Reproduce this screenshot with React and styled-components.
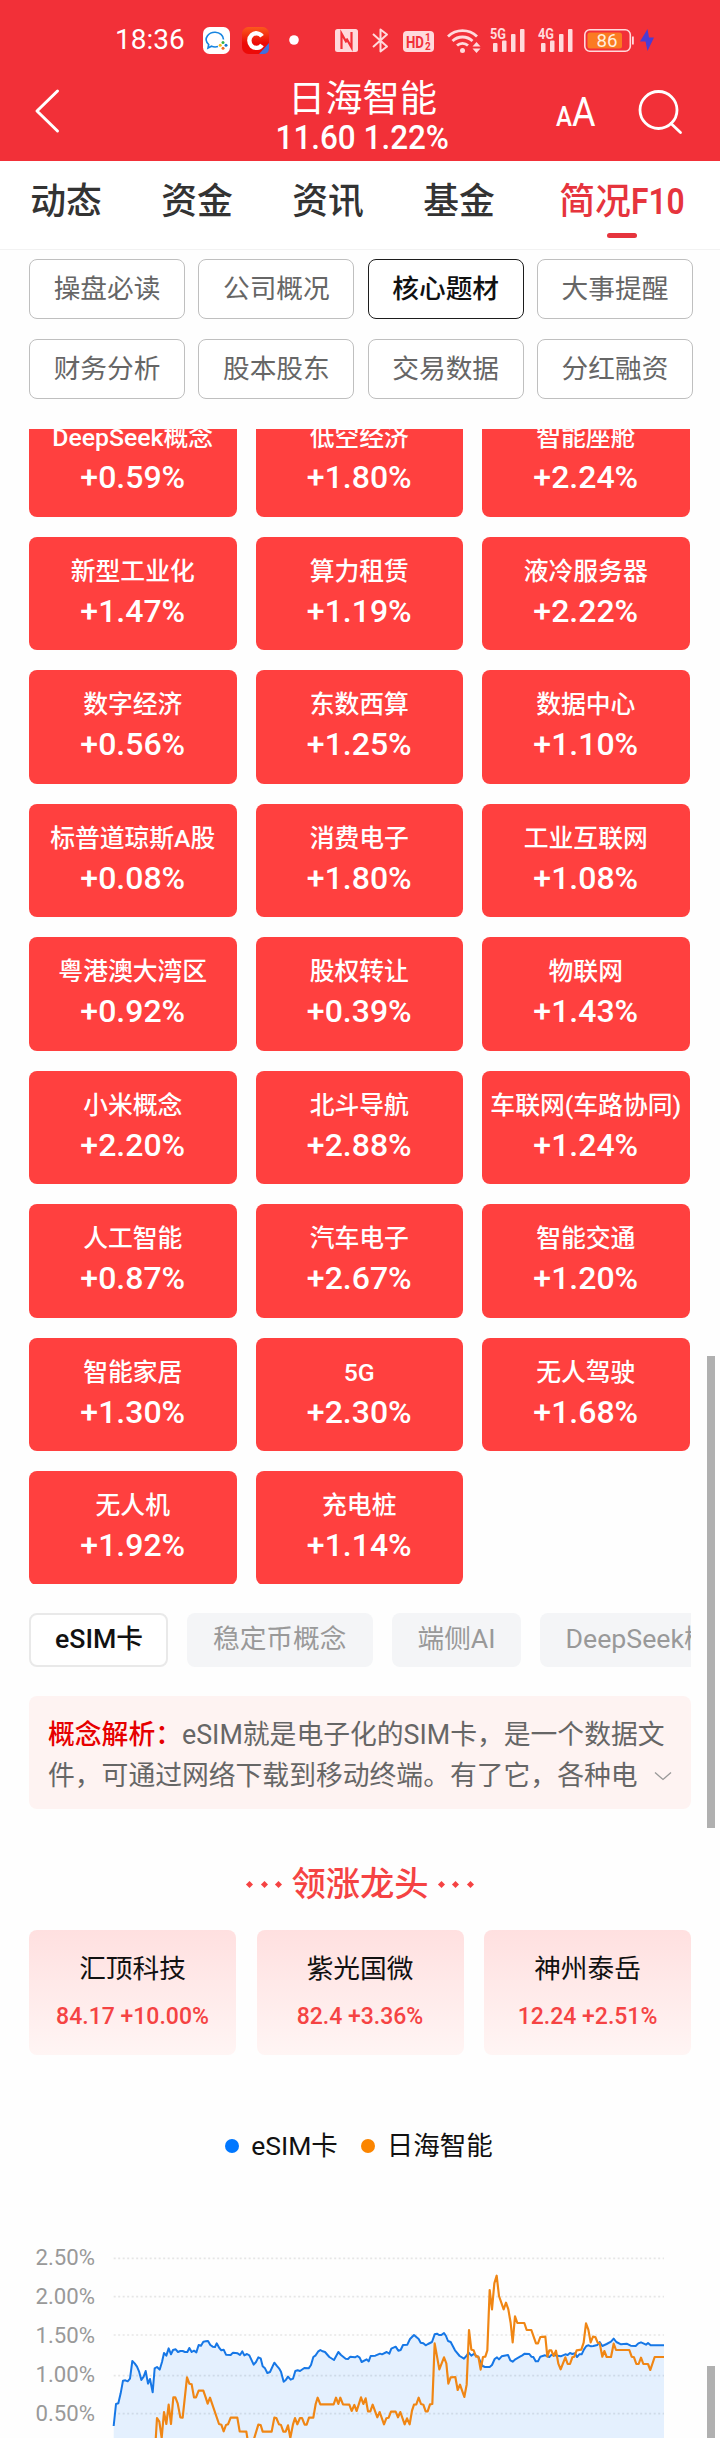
import React, { useState } from "react";
import styled, { createGlobalStyle } from "styled-components";

const GlobalStyle = createGlobalStyle`
  * {
    box-sizing: border-box;
  }
  body {
    margin: 0;
    background-color: #fefefe;
    font-family: Roboto, "Noto Sans CJK SC", sans-serif;
  }
`;

const Page = styled.div`
  position: relative;
  width: 720px;
  height: 2438px;
  overflow: hidden;
`;

const Header = styled.header`
  height: 161px;
  background-color: #f23038;
  color: #fff;
`;

const StatusBar = styled.div`
  display: flex;
  align-items: center;
  height: 72px;
  padding: 8px 0 0 115px;
`;

const Clock = styled.div`
  width: 70px;
  font-size: 28px;
  line-height: 32px;
  white-space: nowrap;
`;

const StatusIcon = styled.svg`
  display: block;
  flex: none;
  margin-left: ${(props) => props.$gap}px;
  margin-top: ${(props) => props.$drop || 0}px;
  overflow: visible;
`;

const TitleBar = styled.div`
  display: flex;
  align-items: center;
  justify-content: space-between;
  height: 78px;
  padding: 0 37px 0 35px;
`;

const TitleSide = styled.div`
  display: flex;
  align-items: center;
  justify-content: ${(props) => (props.$end ? "flex-end" : "flex-start")};
  gap: 43px;
  width: 150px;
`;

const TitleIcon = styled.svg`
  display: block;
  flex: none;
  overflow: visible;
`;

const StockTitle = styled.div`
  text-align: center;
  padding: 11px 0 0 7px;
`;

const StockName = styled.div`
  font-size: 37.3px;
  line-height: 42px;
`;

const StockPrice = styled.div`
  font-size: 33.8px;
  font-weight: 500;
  line-height: 34px;
  margin: 1px -6px 0;
  transform: scaleX(0.93);
  white-space: nowrap;
`;

const Tabs = styled.nav`
  display: flex;
  gap: 59px;
  height: 89px;
  padding: 19px 0 0 30px;
  border-bottom: 1px solid #f2f2f2;
  background-color: #fff;
`;

const Tab = styled.div`
  display: flex;
  flex-direction: column;
  align-items: center;
  font-size: 35.8px;
  font-weight: 500;
  line-height: 44px;
  white-space: nowrap;
  cursor: pointer;
  width: ${(props) => (props.$active ? "126px" : "72px")};
  margin-left: ${(props) => (props.$active ? "5px" : "0")};
  color: ${(props) => (props.$active ? "#e6343d" : "#333")};

  &::after {
    content: "";
    display: ${(props) => (props.$active ? "block" : "none")};
    width: 30px;
    height: 5px;
    margin-top: 9px;
    border-radius: 3px;
    background-color: #e6343d;
  }
`;

const TabLabel = styled.div`
  display: flex;
`;

const Narrow = styled.span`
  display: block;
  width: 54px;
  font-size: 36.5px;
  font-weight: 600;
  transform: scaleX(0.87);
  transform-origin: left center;
`;

const Filters = styled.div`
  display: grid;
  grid-template-columns: repeat(4, 156px);
  justify-content: space-between;
  row-gap: 20px;
  height: 179px;
  padding: 9px 27px 0 29px;
  align-content: start;
`;

const Filter = styled.button`
  height: 60px;
  padding: 0 0 1px;
  border: 1px solid ${(props) => (props.$active ? "#1c1c1c" : "#bfbfbf")};
  border-radius: 8px;
  background-color: #fff;
  color: ${(props) => (props.$active ? "#111" : "#666")};
  font-family: inherit;
  font-size: 26.7px;
  font-weight: ${(props) => (props.$active ? 500 : 400)};
  line-height: 40px;
`;

const TileArea = styled.div`
  height: 1155px;
  overflow: hidden;
`;

/* scrolled a little, so the first row is cut by the filters above */
const TileGrid = styled.div`
  display: grid;
  grid-template-columns: repeat(3, 207.5px);
  grid-auto-rows: 113.5px;
  gap: 20px 19px;
  margin-top: -26px;
  padding-left: 29px;
`;

const TileCard = styled.div`
  display: flex;
  flex-direction: column;
  align-items: center;
  padding-top: 17px;
  border-radius: 8px;
  background-color: #ff403f;
  color: #fff;
  white-space: nowrap;
`;

const TileName = styled.div`
  font-size: 24.8px;
  font-weight: 500;
  line-height: 36px;
`;

const TileChange = styled.div`
  font-size: 32px;
  font-weight: 500;
  line-height: 40px;
  margin-top: 1px;
`;

const Chips = styled.div`
  display: flex;
  gap: 19px;
  width: 662px;
  margin: 29px 0 0 29px;
  overflow: hidden;
`;

const Chip = styled.div`
  flex: none;
  width: ${(props) => props.$width}px;
  height: 54px;
  padding-left: ${(props) => (props.$active ? 24 : 26)}px;
  border: ${(props) => (props.$active ? "2px solid #e9e9e9" : "0")};
  border-radius: 8px;
  background-color: ${(props) => (props.$active ? "#fff" : "#f4f5f7")};
  color: ${(props) => (props.$active ? "#111" : "#999")};
  font-size: 26.7px;
  font-weight: ${(props) => (props.$active ? 500 : 400)};
  line-height: ${(props) => (props.$active ? 49 : 53)}px;
  white-space: nowrap;
`;

const Concept = styled.div`
  display: flex;
  align-items: flex-end;
  width: 662px;
  height: 113px;
  margin: 29px 0 0 29px;
  padding: 0 18px 13px 19px;
  border-radius: 8px;
  background-color: #fef3f2;
`;

const ConceptText = styled.div`
  flex: none;
  width: 606px;
  height: 81px;
  color: #666;
  font-size: 26.8px;
  line-height: 40.5px;
  white-space: nowrap;

  b {
    color: #e60000;
    font-weight: 500;
  }
`;

const ExpandIcon = styled.svg`
  display: block;
  flex: none;
  margin-bottom: 15px;
`;

const SectionTitle = styled.div`
  display: flex;
  align-items: center;
  justify-content: center;
  gap: 10px;
  height: 50px;
  margin-top: 50px;
  color: #f54343;
  font-size: 34.3px;
  font-weight: 500;
  line-height: 50px;
`;

const Dots = styled.div`
  display: flex;
  gap: 9.5px;

  i {
    width: 5px;
    height: 5px;
    background-color: #f54343;
    transform: rotate(45deg);
  }
`;

const Leaders = styled.div`
  display: flex;
  justify-content: space-between;
  width: 662px;
  margin: 21px 0 0 29px;
`;

const Leader = styled.div`
  width: 207px;
  height: 125px;
  padding-top: 19px;
  border-radius: 8px;
  background: linear-gradient(#ffe0e0, #fff5f4);
  text-align: center;
`;

const LeaderName = styled.div`
  color: #111;
  font-size: 26.7px;
  line-height: 40px;
`;

const LeaderPrice = styled.div`
  margin-top: 12px;
  color: #f54343;
  font-size: 23px;
  font-weight: 500;
  line-height: 32px;
`;

const Legend = styled.div`
  display: flex;
  justify-content: center;
  gap: 23px;
  height: 40px;
  margin: 71px 2px 0 0;
`;

const LegendItem = styled.div`
  display: flex;
  align-items: center;
  gap: 12px;
  color: #111;
  font-size: 26.5px;
  line-height: 40px;

  &::before {
    content: "";
    width: 14px;
    height: 14px;
    border-radius: 50%;
    background-color: ${(props) => props.$color};
  }
`;

const ChartArea = styled.div`
  display: flex;
  height: 208px;
  margin-top: 64px;
`;

const Axis = styled.div`
  width: 95px;
  height: 208px;
  padding-top: 7.5px;
  overflow: hidden;
  color: #999;
  font-size: 22.2px;
  line-height: 39px;
  text-align: right;
`;

const Plot = styled.svg`
  display: block;
  margin-left: 17px;
`;

const ScrollThumb = styled.div`
  position: absolute;
  top: ${(props) => props.$top}px;
  left: 707px;
  width: 8px;
  height: ${(props) => props.$height}px;
  background-color: #b0b0b0;
`;

const tabs = ["动态", "资金", "资讯", "基金"];

const filters = [
  "操盘必读", "公司概况", "核心题材", "大事提醒",
  "财务分析", "股本股东", "交易数据", "分红融资",
];

const concepts = [
  { name: "DeepSeek概念", change: "+0.59%" },
  { name: "低空经济", change: "+1.80%" },
  { name: "智能座舱", change: "+2.24%" },
  { name: "新型工业化", change: "+1.47%" },
  { name: "算力租赁", change: "+1.19%" },
  { name: "液冷服务器", change: "+2.22%" },
  { name: "数字经济", change: "+0.56%" },
  { name: "东数西算", change: "+1.25%" },
  { name: "数据中心", change: "+1.10%" },
  { name: "标普道琼斯A股", change: "+0.08%" },
  { name: "消费电子", change: "+1.80%" },
  { name: "工业互联网", change: "+1.08%" },
  { name: "粤港澳大湾区", change: "+0.92%" },
  { name: "股权转让", change: "+0.39%" },
  { name: "物联网", change: "+1.43%" },
  { name: "小米概念", change: "+2.20%" },
  { name: "北斗导航", change: "+2.88%" },
  { name: "车联网(车路协同)", change: "+1.24%" },
  { name: "人工智能", change: "+0.87%" },
  { name: "汽车电子", change: "+2.67%" },
  { name: "智能交通", change: "+1.20%" },
  { name: "智能家居", change: "+1.30%" },
  { name: "5G", change: "+2.30%" },
  { name: "无人驾驶", change: "+1.68%" },
  { name: "无人机", change: "+1.92%" },
  { name: "充电桩", change: "+1.14%" },
];

const chips = [
  { name: "eSIM卡", width: 139 },
  { name: "稳定币概念", width: 185.5 },
  { name: "端侧AI", width: 129 },
  { name: "DeepSeek概念", width: 212 },
];

const leaders = [
  { name: "汇顶科技", price: "84.17 +10.00%" },
  { name: "紫光国微", price: "82.4 +3.36%" },
  { name: "神州泰岳", price: "12.24 +2.51%" },
];

const axisLabels = ["2.50%", "2.00%", "1.50%", "1.00%", "0.50%"];
const gridLines = [85, 200, 315, 437, 551];

// series points, in thirds of a pixel
const esimLine =
  "341,588 348,522 355,520 362,490 369,452 376,451 383,454 390,446 397,393 404,400 411,410 417,424 424,450 431,440 437,423 444,461 450,447 458,487 464,415 471,411 479,419 486,396 492,369 499,377 506,355 513,373 519,360 527,358 534,366 541,363 548,363 555,366 562,366 568,354 575,366 582,362 589,367 596,345 603,347 610,335 617,334 624,333 631,345 638,350 645,351 650,340 658,354 664,361 671,359 678,374 692,375 699,368 713,370 720,375 727,364 733,376 741,372 748,376 761,404 768,396 775,382 782,385 788,409 795,415 802,429 810,426 823,398 830,407 837,415 843,425 851,455 858,449 864,440 872,449 879,446 886,423 893,421 900,423 913,414 926,415 933,405 940,381 947,376 954,365 961,360 968,364 975,366 988,381 1002,390 1015,366 1023,375 1037,386 1044,387 1051,380 1065,382 1072,378 1079,383 1085,396 " +
  "1100,388 1106,394 1112,378 1126,377 1140,371 1146,373 1160,366 1168,371 1174,356 1187,350 1195,362 1202,360 1209,345 1222,344 1230,327 1242,315 1256,327 1262,338 1270,340 1277,346 1284,342 1296,336 1304,313 1311,311 1317,315 1324,315 1332,309 1338,318 1344,333 1352,336 1365,361 1379,378 1392,386 1399,378 1406,368 1414,377 1421,372 1435,381 1442,397 1448,408 1455,411 1469,411 1476,405 1484,387 1491,382 1497,388 1505,379 1524,375 1531,391 1538,395 1546,388 1560,380 1567,376 1574,371 1588,372 1594,380 1600,381 1607,394 1614,394 1621,380 1635,376 1641,378 1648,381 1655,374 1682,379 1696,373 1703,375 1710,369 1717,372 1725,370 1731,381 1738,373 1745,373 1752,358 1759,348 1766,346 1773,349 1780,348 1792,345 1799,336 1807,348 1820,342 1833,335 1841,326 1849,336 1863,343 1880,341 1892,347 1907,348 1915,340 1923,337 1930,340 1938,344 1944,339 1952,346 1992,346";

const stockLine =
  "467,630 471,564 478,575 485,624 492,546 499,582 506,524 513,582 520,502 526,502 533,520 541,562 548,563 561,442 568,461 575,463 582,502 588,502 596,482 610,482 617,502 623,521 630,503 657,582 664,584 671,604 678,585 684,583 692,563 712,563 719,604 739,605 743,630 761,630 775,584 782,585 788,605 815,605 823,563 829,564 837,583 843,585 850,605 857,605 864,586 871,624 879,583 885,564 892,583 900,564 906,564 914,584 920,584 927,563 940,563 947,522 953,503 961,523 1001,523 1008,503 1015,522 1021,503 1029,523 1048,524 1055,543 1063,525 1070,543 1083,502 " +
  "1090,522 1097,505 1104,544 1111,544 1118,524 1132,562 1139,546 1152,583 1159,565 1166,563 1173,545 1187,545 1194,562 1201,546 1214,583 1221,565 1229,583 1236,542 1242,524 1249,523 1256,503 1263,522 1270,524 1277,544 1283,544 1290,523 1297,522 1304,340 1318,418 1332,382 1339,400 1345,461 1352,442 1366,441 1373,480 1380,464 1393,501 1400,464 1407,300 1414,359 1421,361 1428,380 1435,380 1442,419 1449,381 1456,380 1462,361 1469,180 1476,238 1483,160 1490,137 1497,198 1511,238 1518,218 1525,238 1532,279 1538,337 1545,259 1552,279 1573,279 1580,300 1594,300 1608,340 1614,340 1621,321 1636,320 1642,380 1648,361 1654,361 1661,378 1668,362 1675,401 1682,418 1696,382 1703,402 1710,402 1717,382 1723,380 1730,361 1744,359 1751,338 1758,280 1765,299 1772,337 1779,320 1786,321 1793,338 1799,340 1807,380 1813,363 1820,381 1833,381 1841,341 1848,360 1888,360 1895,380 1902,382 1909,402 1916,402 1923,383 1930,402 1944,402 1951,420 1964,381 1992,381";

const Signal = ({ label, gap }) => (
  <StatusIcon $gap={gap} width="36" height="26" viewBox="0 0 36 26" fill="#ffdadc">
    <text x="0" y="11.5" fontSize="15" fontWeight="700" textLength="16" lengthAdjust="spacingAndGlyphs">
      {label}
    </text>
    <rect x="3" y="16" width="4.5" height="9" rx="1" />
    <rect x="12" y="13.5" width="4.5" height="11.5" rx="1" />
    <rect x="21" y="7" width="4.5" height="18" rx="1" />
    <rect x="30" y="2" width="4.5" height="23" rx="1" />
  </StatusIcon>
);

const Status = () => (
  <StatusBar>
    <Clock>18:36</Clock>
    <StatusIcon $gap={17.5} width="27" height="27" viewBox="0 0 27 27">
      <rect width="27" height="27" rx="6.5" fill="#fff" />
      <path
        d="M15 19.500q-3.300 1-6.500-.3L5 21l.7-3.500C3 15 2.500 11.500 4.500 8.800 6.500 6 9.500 5.200 12.300 5.300c4.500.2 8 3.200 8.200 7.200"
        fill="none"
        stroke="#1684e0"
        strokeWidth="1.6"
      />
      <circle cx="20" cy="15.500" r="1.500" fill="#35b24a" />
      <circle cx="17.200" cy="18.300" r="1.500" fill="#f7b916" />
      <circle cx="23" cy="18.300" r="1.500" fill="#1477d4" />
      <circle cx="20" cy="21.300" r="1.500" fill="#ee6b25" />
    </StatusIcon>
    <StatusIcon $gap={12.5} width="27" height="27" viewBox="0 0 27 27">
      <defs>
        <linearGradient id="app" x1="0" y1="0" x2="0" y2="1">
          <stop offset="0" stopColor="#fb5a1c" />
          <stop offset="0.6" stopColor="#ec0a08" />
        </linearGradient>
      </defs>
      <rect width="27" height="27" rx="6.5" fill="url(#app)" />
      <path d="M27 16v5q0 6-6 6h-4z" fill="#3f6fe0" />
      <path d="M20 9.300a7 7.300 0 1 0 0 8.600" fill="none" stroke="#fff" strokeWidth="4.4" />
    </StatusIcon>
    <StatusIcon $gap={20} width="10" height="10" viewBox="0 0 10 10">
      <circle cx="5" cy="5" r="4.800" fill="#fff" />
    </StatusIcon>
    <StatusIcon $gap={36} width="23" height="23" viewBox="0 0 23 23">
      <rect width="23" height="23" rx="2.5" fill="#ffdadc" />
      <path d="M6.500 20V4.500l5 9M16.500 3v15.500l-5-9" fill="none" stroke="#f23038" strokeWidth="2.2" />
    </StatusIcon>
    <StatusIcon $gap={13.5} width="17" height="25" viewBox="0 0 17 25">
      <path
        d="M1 6l14 12.500-6.500 5V1.500l6.500 5L1 19"
        fill="none"
        stroke="#ffdadc"
        strokeWidth="2"
        strokeLinejoin="round"
      />
    </StatusIcon>
    <StatusIcon $gap={14.5} $drop={2} width="31" height="21" viewBox="0 0 31 21">
      <rect width="31" height="21" rx="4" fill="#ffdadc" />
      <g fill="#f23038" fontWeight="700">
        <text x="3" y="16.5" fontSize="17" textLength="18" lengthAdjust="spacingAndGlyphs">HD</text>
        <text x="22" y="9.8" fontSize="10">1</text>
        <text x="22" y="18.8" fontSize="10">2</text>
      </g>
    </StatusIcon>
    <StatusIcon $gap={13} width="33" height="25" viewBox="0 0 33 25">
      <g fill="none" stroke="#ffdadc" strokeWidth="2.8">
        <path d="M1 8.500a21 21 0 0 1 29 0" />
        <path d="M5.500 13a14.500 14.500 0 0 1 20 0" />
        <path d="M10 17.500a8 8 0 0 1 11 0" />
      </g>
      <circle cx="15.500" cy="22.500" r="2.500" fill="#ffdadc" />
      <path d="M25.500 18.500h8l-4-4.500zM25.500 20.500h8l-4 4.500z" fill="#ffdadc" />
    </StatusIcon>
    <Signal label="5G" gap={10} />
    <Signal label="4G" gap={11.5} />
    <StatusIcon $gap={10.5} width="50" height="23" viewBox="0 0 50 23">
      <rect x="0.8" y="0.8" width="45.5" height="21.4" rx="5" fill="none" stroke="#ffdadc" strokeWidth="1.6" />
      <rect x="3.5" y="3.5" width="34.5" height="16" rx="2.5" fill="#fb7b22" />
      <rect x="48" y="7.5" width="1.8" height="8" fill="#ffdadc" />
      <text x="12.5" y="17.7" fontSize="18" fill="#ffeede" textLength="21" lengthAdjust="spacingAndGlyphs">86</text>
    </StatusIcon>
    <StatusIcon $gap={6} width="14" height="22" viewBox="0 0 14 22">
      <path d="M7.500 0L0 12.500h5.500L7.500 22 14 8.500H9z" fill="#4b3cd4" />
    </StatusIcon>
  </StatusBar>
);

const Chart = () => (
  <ChartArea>
    <Axis>
      {axisLabels.map((label) => (
        <div key={label}>{label}</div>
      ))}
    </Axis>
    <Plot width="553" height="208" viewBox="336 0 1659 624">
      {gridLines.map((y) => (
        <line key={y} x1="341" x2="1992" y1={y} y2={y} stroke="#e6e6e6" strokeWidth="5" strokeDasharray="6 7.5" />
      ))}
      <polygon points={`341,630 ${esimLine} 1992,630`} fill="#0077ff" fillOpacity="0.1" />
      <polyline points={esimLine} fill="none" stroke="#1677e6" strokeWidth="6" strokeLinejoin="round" />
      <polyline points={stockLine} fill="none" stroke="#f08614" strokeWidth="6.5" strokeLinejoin="round" />
    </Plot>
  </ChartArea>
);

const App = () => {
  const [activeFilter, setActiveFilter] = useState("核心题材");
  const [activeChip, setActiveChip] = useState("eSIM卡");

  return (
    <Page>
      <GlobalStyle />
      <Header>
        <Status />
        <TitleBar>
          <TitleSide>
            <TitleIcon width="25" height="44" viewBox="0 0 25 44">
              <path d="M22.500 2L2 22l20.500 20" fill="none" stroke="#fff" strokeWidth="3" strokeLinecap="round" strokeLinejoin="round" />
            </TitleIcon>
          </TitleSide>
          <StockTitle>
            <StockName>日海智能</StockName>
            <StockPrice>11.60 1.22%</StockPrice>
          </StockTitle>
          <TitleSide $end>
            <TitleIcon width="40" height="30" viewBox="0 0 40 30" fill="#fff">
              <text x="0" y="30" fontSize="27" fontWeight="500" textLength="16" lengthAdjust="spacingAndGlyphs">A</text>
              <text x="16" y="30" fontSize="41" fontWeight="400" textLength="23.5" lengthAdjust="spacingAndGlyphs">A</text>
            </TitleIcon>
            <TitleIcon width="44" height="44" viewBox="0 0 44 44" fill="none" stroke="#fff" strokeWidth="2.8" strokeLinecap="round">
              <circle cx="19.500" cy="21" r="18.500" />
              <path d="M32 34.500l9.500 9" />
            </TitleIcon>
          </TitleSide>
        </TitleBar>
      </Header>

      <Tabs>
        {tabs.map((tab) => (
          <Tab key={tab}>{tab}</Tab>
        ))}
        <Tab $active>
          <TabLabel>
            简况<Narrow>F10</Narrow>
          </TabLabel>
        </Tab>
      </Tabs>

      <Filters>
        {filters.map((name) => (
          <Filter key={name} $active={name === activeFilter} onClick={() => setActiveFilter(name)}>
            {name}
          </Filter>
        ))}
      </Filters>

      <TileArea>
        <TileGrid>
          {concepts.map((item) => (
            <TileCard key={item.name}>
              <TileName>{item.name}</TileName>
              <TileChange>{item.change}</TileChange>
            </TileCard>
          ))}
        </TileGrid>
      </TileArea>

      <Chips>
        {chips.map((chip) => (
          <Chip
            key={chip.name}
            $width={chip.width}
            $active={chip.name === activeChip}
            onClick={() => setActiveChip(chip.name)}
          >
            {chip.name}
          </Chip>
        ))}
      </Chips>

      <Concept>
        <ConceptText>
          <b>概念解析：</b>eSIM就是电子化的SIM卡，是一个数据文
          <br />
          件，可通过网络下载到移动终端。有了它，各种电
        </ConceptText>
        <ExpandIcon width="18" height="10" viewBox="0 0 18 10">
          <path d="M1 1.500l8 7 8-7" fill="none" stroke="#999" strokeWidth="1.3" />
        </ExpandIcon>
      </Concept>

      <SectionTitle>
        <Dots><i /><i /><i /></Dots>
        领涨龙头
        <Dots><i /><i /><i /></Dots>
      </SectionTitle>

      <Leaders>
        {leaders.map((item) => (
          <Leader key={item.name}>
            <LeaderName>{item.name}</LeaderName>
            <LeaderPrice>{item.price}</LeaderPrice>
          </Leader>
        ))}
      </Leaders>

      <Legend>
        <LegendItem $color="#0077ff">eSIM卡</LegendItem>
        <LegendItem $color="#fb8500">日海智能</LegendItem>
      </Legend>

      <Chart />

      <ScrollThumb $top={1356} $height={472} />
      <ScrollThumb $top={2366} $height={72} />
    </Page>
  );
};

export default App;
